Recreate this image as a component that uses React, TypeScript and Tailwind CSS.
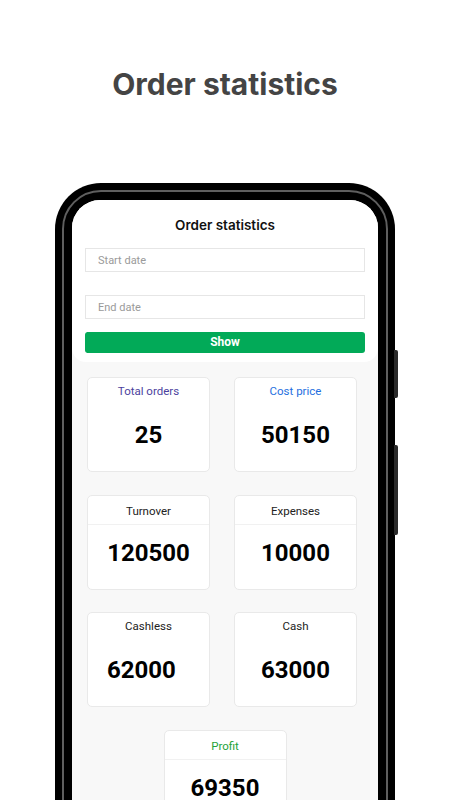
import React from 'react'

type Stat = {
  title: string
  value: string
  titleColor: string
  divider?: boolean
  left?: boolean
}

const stats: Stat[] = [
  { title: 'Total orders', value: '25', titleColor: 'text-[#4b3f9e]' },
  { title: 'Cost price', value: '50150', titleColor: 'text-[#1f6fe0]' },
  { title: 'Turnover', value: '120500', titleColor: 'text-[#222]', divider: true },
  { title: 'Expenses', value: '10000', titleColor: 'text-[#222]', divider: true },
  { title: 'Cashless', value: '62000', titleColor: 'text-[#222]', left: true },
  { title: 'Cash', value: '63000', titleColor: 'text-[#222]' },
]

function StatCard({ stat }: { stat: Stat }) {
  return (
    <div className="h-[95px] bg-white border border-[#e9e9e9] rounded-[5px] flex flex-col">
      <div
        className={`text-[11.5px] leading-[14px] text-center ${stat.titleColor} ${
          stat.divider ? 'pt-[8px] pb-[6px] border-b border-[#f1f1f1]' : 'pt-[6px]'
        }`}
      >
        {stat.title}
      </div>
      <div
        className={`text-[24px] font-bold text-black leading-[28px] ${
          stat.left ? 'text-left pl-[19px]' : 'text-center'
        } ${stat.divider ? 'mt-[14px]' : 'mt-[23px]'}`}
      >
        {stat.value}
      </div>
    </div>
  )
}

export default function App() {
  return (
    <div className="h-[800px] overflow-hidden bg-white" style={{ fontFamily: 'Roboto, "Liberation Sans", sans-serif' }}>
      <h1
        className="pt-[67px] text-center text-[30px] leading-[34px] font-bold text-[#444]"
        style={{ fontFamily: 'Inter, "Liberation Sans", sans-serif' }}
      >
        Order statistics
      </h1>

      {/* phone */}
      <div className="relative mx-auto mt-[82px] w-[340px] rounded-[46px] bg-black p-[7px]">
        <div className="absolute right-[-3px] top-[167px] h-[48px] w-[4px] rounded-r-[2px] bg-[#2a2a2a]" />
        <div className="absolute right-[-3px] top-[262px] h-[90px] w-[4px] rounded-r-[2px] bg-[#2a2a2a]" />
        <div className="rounded-[39px] border-[2px] border-[#5f5f5f] bg-black p-[8px]">
          <div className="h-[700px] overflow-hidden rounded-[28px] bg-[#f8f8f8]">
            {/* header */}
            <div className="bg-white rounded-b-[14px] px-[13px] pb-[9px]">
              <div
                className="pt-[16px] pb-[14px] text-center text-[13.5px] leading-[18px] font-semibold text-[#111]"
                style={{ fontFamily: 'Inter, "Liberation Sans", sans-serif' }}
              >
                Order statistics
              </div>
              <input
                placeholder="Start date"
                className="block w-full h-[24px] border border-[#e6e6e6] px-[12px] text-[11px] text-[#333] placeholder:text-[#9a9a9a] outline-none"
              />
              <input
                placeholder="End date"
                className="block w-full h-[24px] mt-[23px] border border-[#e6e6e6] px-[12px] text-[11px] text-[#333] placeholder:text-[#9a9a9a] outline-none"
              />
              <button className="block w-full h-[21px] mt-[13px] rounded-[3px] bg-[#02aa58] text-white text-[12px] font-bold leading-[21px]">
                Show
              </button>
            </div>

            {/* cards */}
            <div className="grid grid-cols-2 gap-x-[24px] gap-y-[22.5px] pl-[15px] pr-[21px] pt-[15px]">
              {stats.map((s) => (
                <StatCard key={s.title} stat={s} />
              ))}
            </div>
            <div className="flex justify-center mt-[22.5px]">
              <div className="w-[123px]">
                <StatCard stat={{ title: 'Profit', value: '69350', titleColor: 'text-[#1fa33a]', divider: true }} />
              </div>
            </div>
          </div>
        </div>
      </div>
    </div>
  )
}
